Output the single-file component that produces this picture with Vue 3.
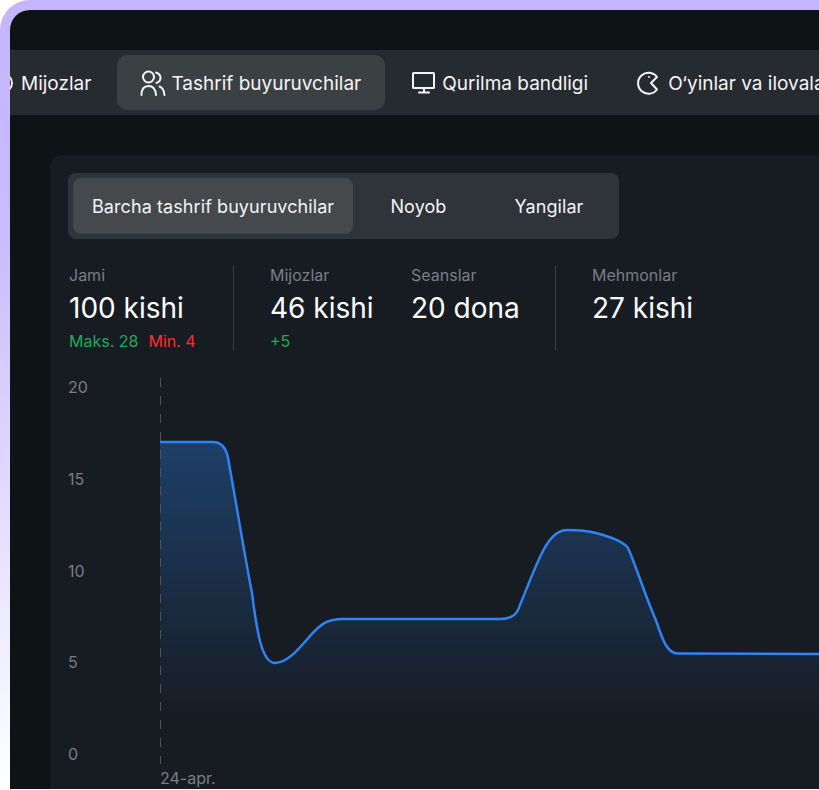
<script setup>
const tabs = [
  { name: 'Mijozlar', icon: 'clients' },
  { name: 'Tashrif buyuruvchilar', icon: 'users', active: true },
  { name: 'Qurilma bandligi', icon: 'monitor' },
  { name: 'O‘yinlar va ilovalar', icon: 'pacman' },
]
const filters = ['Barcha tashrif buyuruvchilar', 'Noyob', 'Yangilar']
const yTicks = [20, 15, 10, 5, 0]

const linePath = 'M0 64 L53 64 C62 64 66 70 68 80 C75 118 85 180 92 215 C97 255 102 285 115 285 C127 285 138 272 150 258 C160 247 166 241 183 241 L340 241 C350 241 355 238 358 232 C365 215 372 196 380 179 C388 162 396 152 407 152 C418 152 425 152 436 155 C450 159 463 163 468 170 C475 185 486 220 495 240 C501 255 505 275.500 518 275.500 L659 276'
const areaPath = linePath + ' L659 388 L0 388 Z'
</script>

<template>
  <div class="shell">
    <div class="frame">
      <nav class="tabs">
        <div v-for="tab in tabs" :key="tab.name" class="tab" :class="{ 'tab-active': tab.active }">
          <svg class="tab-ic" viewBox="0 0 26 26" fill="none" stroke="currentColor" stroke-width="2" stroke-linecap="round" stroke-linejoin="round">
            <template v-if="tab.icon === 'users'">
              <circle cx="8.500" cy="7" r="5.500" />
              <path d="M1.500 25C1.500 19 4 16 8.500 16S15.500 19 16 25" />
              <path d="M16 2.500C19 3.500 20.500 5.500 20.500 8C20.500 10 19 12 16.500 13" />
              <path d="M19.500 16.500C22.500 17.500 24 20 24.500 25" />
            </template>
            <template v-else-if="tab.icon === 'monitor'">
              <rect x="2" y="3" width="21" height="15" rx="0.500" />
              <path d="M13 18v4M8 22.500h10" />
            </template>
            <template v-else-if="tab.icon === 'pacman'">
              <path d="M20 7A10.500 10.500 0 1 0 20 19.500L14 13Z" />
              <circle cx="12" cy="7" r="1" fill="currentColor" stroke="none" />
            </template>
            <template v-else>
              <circle cx="13" cy="13" r="9" />
            </template>
          </svg>
          <span class="tab-txt">{{ tab.name }}</span>
        </div>
      </nav>

      <section class="card">
        <div class="seg">
          <div v-for="(f, i) in filters" :key="f" class="seg-item" :class="{ 'seg-active': i === 0 }">{{ f }}</div>
        </div>

        <div class="stats">
          <div class="stat stat-first">
            <div class="stat-lbl">Jami</div>
            <div class="stat-val">100 kishi</div>
            <div class="stat-sub"><span class="green">Maks. 28</span><span class="red">Min. 4</span></div>
          </div>
          <div class="stat-div"></div>
          <div class="stat stat-second">
            <div class="stat-lbl">Mijozlar</div>
            <div class="stat-val">46 kishi</div>
            <div class="stat-sub"><span class="green">+5</span></div>
          </div>
          <div class="stat stat-third">
            <div class="stat-lbl">Seanslar</div>
            <div class="stat-val">20 dona</div>
          </div>
          <div class="stat-div"></div>
          <div class="stat stat-last">
            <div class="stat-lbl">Mehmonlar</div>
            <div class="stat-val">27 kishi</div>
          </div>
        </div>

        <div class="chart">
          <div class="y-axis">
            <span v-for="t in yTicks" :key="t">{{ t }}</span>
          </div>
          <div class="plot">
            <svg class="plot-svg" viewBox="0 0 659 388" width="659" height="388" fill="none">
              <defs>
                <linearGradient id="area" x1="0" y1="64" x2="0" y2="345" gradientUnits="userSpaceOnUse">
                  <stop offset="0" stop-color="#1e3f68" />
                  <stop offset="1" stop-color="#171c23" />
                </linearGradient>
              </defs>
              <path :d="areaPath" fill="url(#area)" />
              <path d="M0.500 0V386" stroke="#4d525a" stroke-width="1" stroke-dasharray="9 9" />
              <path :d="linePath" stroke="#2f84f2" stroke-width="2.500" />
            </svg>
            <div class="x-lbl">24-apr.</div>
          </div>
        </div>
      </section>
    </div>
  </div>
</template>

<style scoped>
* { box-sizing: border-box; }

.shell {
  width: 819px;
  height: 789px;
  padding: 10px 0 0 10px;
  background: linear-gradient(180deg, #c4b5fd 0%, #c9bcfd 30%, #fff 100%);
  border-radius: 30px 0 0 0;
  overflow: hidden;
  font-family: Inter, "Liberation Sans", sans-serif;
}
.frame {
  height: 100%;
  padding-top: 40px;
  background-color: #0e1316;
  border-radius: 20px 0 0 0;
  overflow: hidden;
}
.tabs {
  display: flex;
  gap: 3px;
  align-items: center;
  height: 65px;
  background-color: #262b2f;
  white-space: nowrap;
}
.tab {
  flex: none;
  display: flex;
  align-items: center;
  gap: 5px;
  height: 55px;
  padding: 0 23px;
  border-radius: 10px;
  color: #f3f4f5;
  font-size: 19px;
}
.tab:first-child {
  margin-left: -43px;
}
.tab-active {
  padding-right: 24px;
  background-color: #3b4043;
}
.tab-txt {
  padding-top: 1px;
}
.tab-ic {
  width: 26px;
  height: 26px;
  flex: none;
}
.card {
  margin: 40px 0 0 40px;
  padding: 18px;
  width: 800px;
  height: 640px;
  background-color: #171c23;
  border-radius: 12px 0 0 0;
}
.seg {
  display: inline-flex;
  padding: 5px;
  background-color: #2f333a;
  border-radius: 8px;
}
.seg-item {
  display: flex;
  align-items: center;
  justify-content: center;
  height: 56px;
  min-width: 130.500px;
  padding: 0 19px;
  border-radius: 8px;
  font-size: 18px;
  letter-spacing: .08px;
  color: #f3f4f5;
}
.seg-active {
  background-color: #45494c;
}
.stats {
  display: flex;
  margin-top: 27px;
  height: 84px;
}
.stat-div {
  width: 1px;
  height: 84px;
  background-color: #3a3e45;
}
.stat-first { width: 164px; margin-left: 1px; }
.stat-second { width: 141px; margin-left: 36px; }
.stat-third { width: 144px; }
.stat-last { margin-left: 36px; }
.stat-lbl {
  font-size: 16px;
  line-height: 18px;
  color: #797d85;
}
.stat-val {
  margin-top: 6px;
  font-size: 28px;
  line-height: 36px;
  color: #fff;
}
.stat-sub {
  display: flex;
  gap: 10px;
  margin-top: 5px;
  font-size: 16px;
  line-height: 20px;
}
.green { color: #1faa59; }
.red { color: #ff2d2d; }
.chart {
  display: flex;
  margin-top: 28px;
}
.y-axis {
  display: flex;
  flex-direction: column;
  justify-content: space-between;
  width: 92px;
  height: 387px;
  margin-top: -1px;
  color: #797d85;
  font-size: 16px;
  line-height: 20px;
}
.plot-svg {
  display: block;
}
.x-lbl {
  margin-top: 2px;
  font-size: 16px;
  line-height: 20px;
  color: #797d85;
}
</style>

<style>
html, body { background: #fff; }
</style>
